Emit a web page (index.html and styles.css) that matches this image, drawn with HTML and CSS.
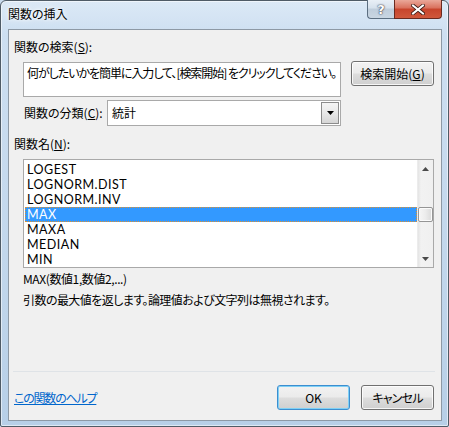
FILE: index.html
```html
<!DOCTYPE html>
<html lang="ja">
<head>
<meta charset="utf-8">
<link rel="stylesheet" href="styles.css">
</head>
<body>
<div class="window">
  <div class="titlebar">
    <span class="title">関数の挿入</span>
    <div class="caption">
      <div class="cap cap-help">?</div>
      <div class="cap cap-close">
        <svg width="14" height="11" viewBox="0 0 14 11"><path d="M2 1.5 L12 9.5 M12 1.5 L2 9.5" stroke="#3a1a14" stroke-width="3.6" stroke-linecap="square"/><path d="M2 1.5 L12 9.5 M12 1.5 L2 9.5" stroke="#ffffff" stroke-width="2" stroke-linecap="square"/></svg>
      </div>
    </div>
  </div>
  <div class="client">
    <div class="label label-search">関数の検索(<u>S</u>):</div>
    <div class="search-row">
      <div class="search-box">何がしたいかを簡単に入力して、[検索開始] をクリックしてください。</div>
      <div class="btn btn-search">検索開始(<u>G</u>)</div>
    </div>
    <div class="cat-row">
      <span class="label cat-label">関数の分類(<u>C</u>):</span>
      <div class="select">
        <span class="select-text">統計</span>
        <div class="select-btn">
          <svg width="7" height="4" viewBox="0 0 7 4"><path d="M0 0 H7 L3.5 4 Z" fill="#000"/></svg>
        </div>
      </div>
    </div>
    <div class="label label-names">関数名(<u>N</u>):</div>
    <div class="listbox">
      <div class="items">
        <div class="item">LOGEST</div>
        <div class="item">LOGNORM.DIST</div>
        <div class="item">LOGNORM.INV</div>
        <div class="item selected">MAX</div>
        <div class="item">MAXA</div>
        <div class="item">MEDIAN</div>
        <div class="item">MIN</div>
      </div>
      <div class="vscroll">
        <div class="arrow arrow-up"><svg width="7" height="4" viewBox="0 0 7 4"><path d="M0 4 H7 L3.5 0 Z" fill="#4a4a4a"/></svg></div>
        <div class="track">
          <div class="thumb"></div>
        </div>
        <div class="arrow arrow-down"><svg width="7" height="4" viewBox="0 0 7 4"><path d="M0 0 H7 L3.5 4 Z" fill="#4a4a4a"/></svg></div>
      </div>
    </div>
    <div class="syntax">MAX(数値1,数値2,...)</div>
    <div class="desc">引数の最大値を返します。論理値および文字列は無視されます。</div>
    <div class="sep"></div>
    <div class="bottom-row">
      <a class="help-link" href="#">この関数のヘルプ</a>
      <div class="btn btn-ok">OK</div>
      <div class="btn btn-cancel">キャンセル</div>
    </div>
  </div>
</div>
</body>
</html>
```
FILE: styles.css
```css
* { box-sizing: border-box; }
html, body {
  margin: 0;
  padding: 0;
  width: 449px;
  height: 427px;
  overflow: hidden;
  background: #c9dbee;
}
body {
  font-family: "Noto Sans CJK JP", "Noto Sans", sans-serif;
  font-size: 12px;
  font-feature-settings: "palt";
  color: #000;
}
.window {
  width: 449px;
  height: 427px;
  border: 1px solid #4f5b66;
  border-radius: 6px 6px 2px 2px;
  background: linear-gradient(180deg, #dce9f6 0%, #cddff1 8%, #c2d7ec 60%, #b7cfe7 100%);
  display: flex;
  flex-direction: column;
  box-shadow: inset 0 0 0 1px rgba(255,255,255,0.55);
}
.titlebar {
  height: 28px;
  display: flex;
  justify-content: space-between;
  align-items: flex-start;
  padding: 0 6px 0 7px;
}
.title {
  margin-top: 5px;
  line-height: 16px;
  text-shadow: 0 0 6px #fff, 0 0 3px #fff;
}
.caption {
  display: flex;
  margin-top: -1px;
}
.cap {
  height: 19px;
  display: flex;
  align-items: center;
  justify-content: center;
  border: 1px solid #5c6e80;
  border-top: none;
}
.cap-help {
  width: 27px;
  border-right: none;
  border-radius: 0 0 0 4px;
  background: linear-gradient(180deg, #e9eff6 0%, #d6e1ec 45%, #bfcddb 50%, #c9d6e2 100%);
  color: #fff;
  font-family: "DejaVu Sans", sans-serif;
  font-weight: bold;
  font-size: 13px;
  text-shadow: 0 0 2px #334, 0 0 1px #223;
}
.cap-close {
  width: 48px;
  border-radius: 0 0 4px 0;
  border-color: #6a2a20;
  background: linear-gradient(180deg, #eaa899 0%, #d9705c 45%, #c7442c 50%, #d0583c 100%);
}
.client {
  margin: 0 6px 5px 7px;
  width: 434px;
  height: 392px;
  border: 1px solid #8d99a5;
  background: #f0f0f0;
  display: flex;
  flex-direction: column;
  padding: 9px 7px 10px 5px;
}
.label { line-height: 16px; }
.label-search { height: 16px; }
.search-row {
  margin-top: 6px;
  margin-left: 9px;
  display: flex;
  align-items: flex-start;
  gap: 10px;
}
.search-box {
  margin-top: 1px;
  width: 318px;
  height: 35px;
  background: #fff;
  border: 1px solid #a9a9a9;
  padding: 2px 3px;
  line-height: 16px;
  white-space: nowrap;
  overflow: hidden;
  letter-spacing: -1.05px;
}
.btn {
  display: flex;
  align-items: center;
  justify-content: center;
  height: 25px;
  border: 1px solid #707070;
  border-radius: 3px;
  background: linear-gradient(180deg, #f2f2f2 0%, #ebebeb 48%, #dddddd 52%, #cfcfcf 100%);
  box-shadow: inset 0 0 0 1px rgba(255,255,255,0.8);
  line-height: 16px;
}
.btn-search { width: 83px; }
.cat-row {
  margin-top: 3px;
  margin-left: 10px;
  display: flex;
  align-items: center;
  height: 26px;
}
.cat-label { width: 83px; }
.select {
  width: 234px;
  height: 26px;
  background: #fff;
  border: 1px solid #a9a9a9;
  display: flex;
  align-items: stretch;
  justify-content: space-between;
}
.select-text {
  padding-left: 4px;
  line-height: 24px;
}
.select-btn {
  width: 18px;
  margin: 1px;
  border: 1px solid #8c8c8c;
  background: linear-gradient(180deg, #f4f4f4 0%, #e8e8e8 50%, #d6d6d6 100%);
  display: flex;
  align-items: center;
  justify-content: center;
}
.label-names { margin-top: 10px; }
.listbox {
  margin-top: 7px;
  margin-left: 9px;
  width: 411px;
  height: 109px;
  background: #fff;
  border: 1px solid #a9a9a9;
  display: flex;
  overflow: hidden;
}
.items {
  flex: 1;
  padding: 2px 0 0 1px;
  overflow: hidden;
}
.item {
  height: 15px;
  line-height: 15px;
  padding-left: 2px;
  white-space: nowrap;
  font-family: "Lato", "Noto Sans CJK JP", sans-serif;
  font-size: 12.5px;
  letter-spacing: 0.5px;
}
.item.selected {
  background: #3399ff;
  color: #fff;
  outline: 1px dotted #e0902c;
  outline-offset: -1px;
}
.vscroll {
  width: 16px;
  background: linear-gradient(90deg, #e4e4e4 0%, #f2f2f2 20%, #f0f0f0 100%);
  border-left: 1px solid #ececec;
  display: flex;
  flex-direction: column;
}
.arrow {
  height: 17px;
  display: flex;
  align-items: center;
  justify-content: center;
}
.track {
  flex: 1;
  padding-top: 30px;
}
.thumb {
  height: 15px;
  border: 1px solid #959595;
  border-radius: 2px;
  background: linear-gradient(90deg, #f6f6f6 0%, #ececec 50%, #dadada 100%);
  box-shadow: inset 0 0 0 1px #fbfbfb;
}
.syntax {
  margin-top: 3px;
  margin-left: 9px;
  line-height: 16px;
  letter-spacing: -0.4px;
}
.desc {
  margin-top: 5px;
  margin-left: 9px;
  line-height: 16px;
  letter-spacing: -0.55px;
}
.sep {
  margin-top: auto;
  height: 1px;
  margin-left: -1px;
  margin-right: -1px;
  background: #dfe3e7;
}
.bottom-row {
  margin-top: 13px;
  display: flex;
  align-items: center;
  height: 25px;
}
.help-link {
  color: #0066cc;
  text-decoration: underline;
  line-height: 16px;
  margin-right: auto;
  letter-spacing: -1.2px;
}
.btn-ok {
  width: 73px;
  border-color: #3c8ed0;
  box-shadow: inset 0 0 0 1px #7fd0f5;
}
.btn-cancel {
  width: 73px;
  margin-left: 11px;
  letter-spacing: -0.8px;
}
```
